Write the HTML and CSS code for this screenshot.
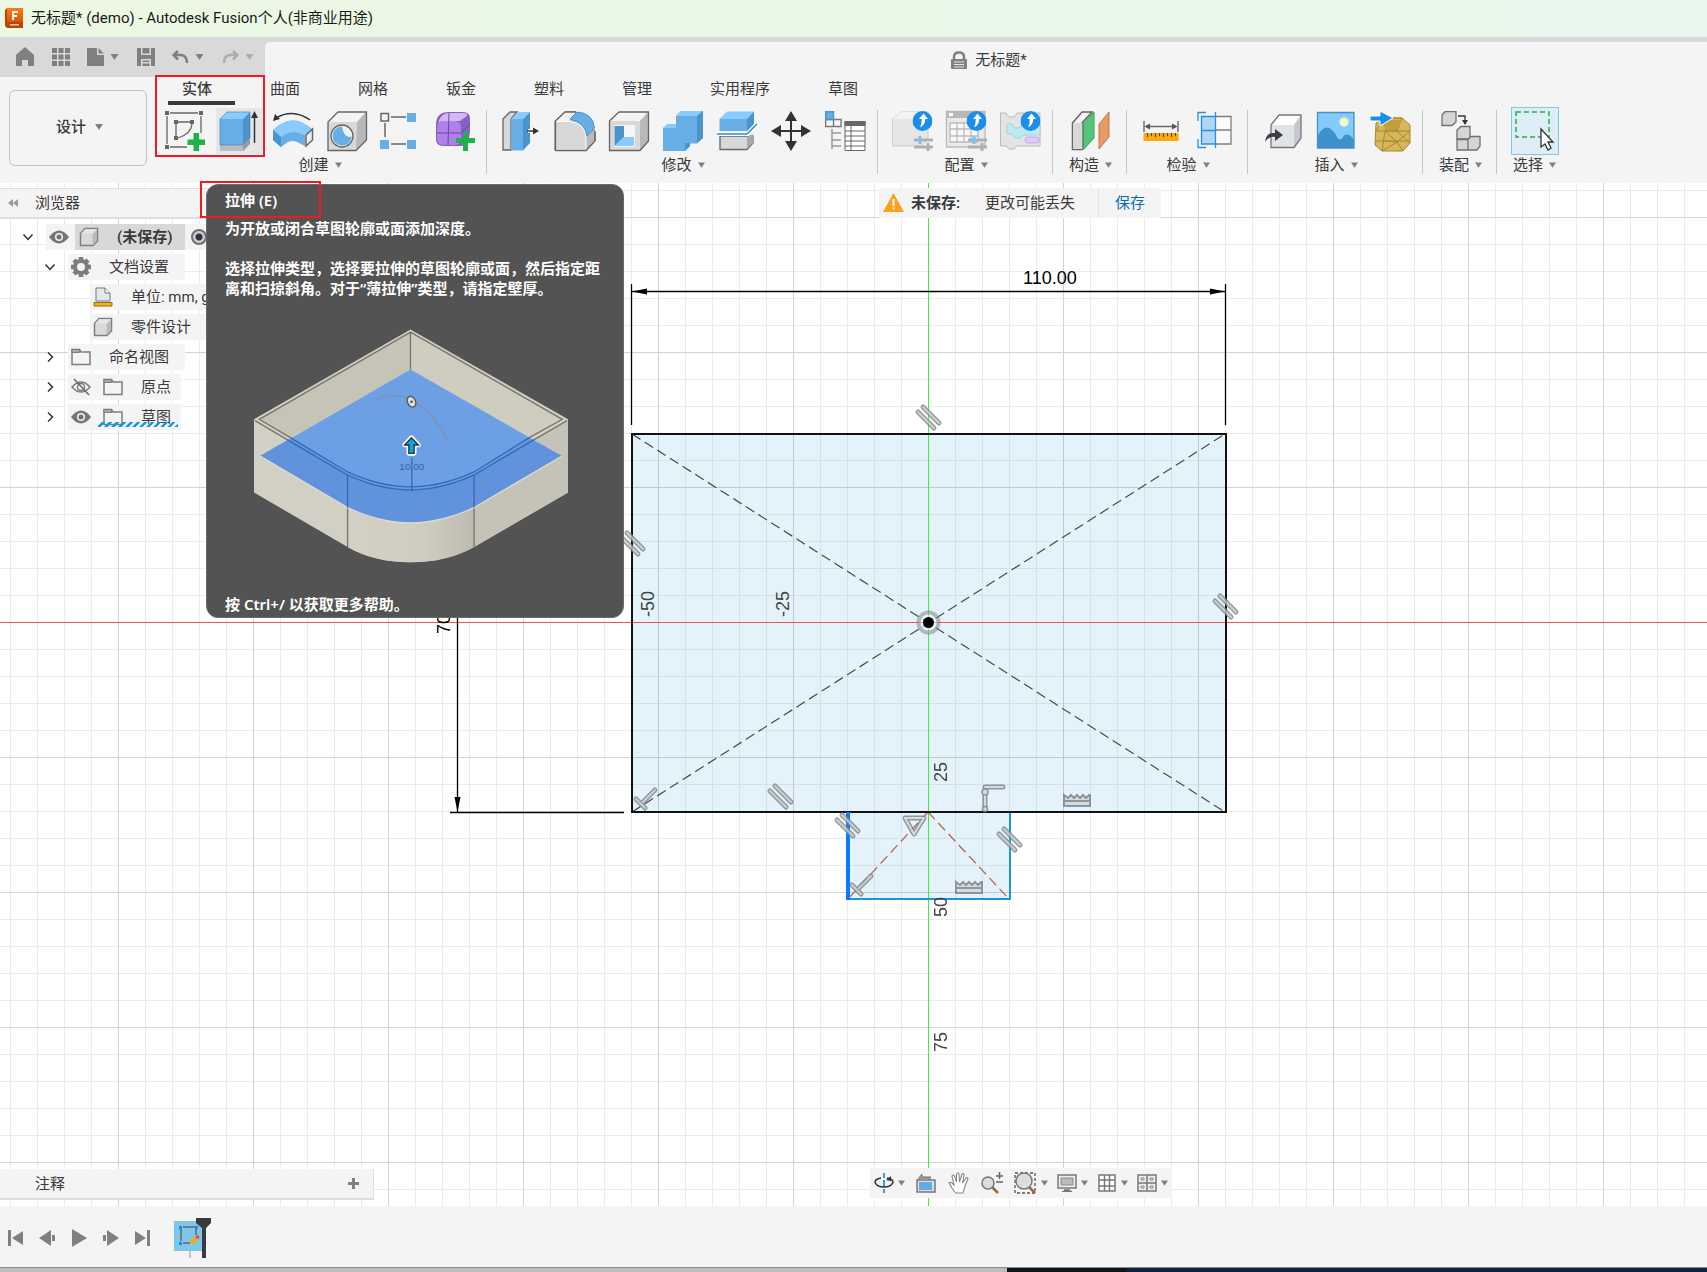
FILE: index.html
```html
<!DOCTYPE html>
<html lang="zh-CN">
<head>
<meta charset="utf-8">
<title>无标题* (demo) - Autodesk Fusion</title>
<link rel="stylesheet" href="styles.css">
</head>
<body>
<svg class="defs" aria-hidden="true">
  <defs>
    <linearGradient id="appGrad" x1="0" y1="0" x2="0" y2="1"><stop offset="0" stop-color="#ff7a1c"/><stop offset="1" stop-color="#e35205"/></linearGradient>
    <symbol id="up-badge" viewBox="0 0 20 20"><circle cx="10" cy="10" r="10" fill="#1a8fe8"/><path d="M11 2.500L15.500 8H12.700Q12.700 14 7.500 16.500Q9.300 13 9.300 8H6.500Z" fill="#fff"/></symbol>
    <symbol id="part" viewBox="0 0 20 20"><path d="M1.500 6.500L6 1.500H18.500V14L14 18.500H1.500Z" fill="#d9d9d9" stroke="#808080" stroke-width="1.500"/><path d="M2 6.500H13.500V18L18 13.500V2H6Z" fill="#eee" opacity=".6"/><path d="M13.500 7V18L18 13.500V2.500Z" fill="#b9b9b9"/></symbol>
    <symbol id="folder" viewBox="0 0 20 20"><path d="M1 17.500V2.500H8.500L10 5H19V17.500Z" fill="#f4f4f4" stroke="#7d7d7d" stroke-width="1.500"/><path d="M1 2.500H8.500V5.500H1Z" fill="#aaa" stroke="#7d7d7d"/></symbol>
    <symbol id="eye" viewBox="0 0 20 20"><path d="M0 10Q10-3 20 10Q10 23 0 10Z" fill="#757575"/><circle cx="10" cy="10" r="4" fill="#f4f4f4"/><circle cx="10" cy="10" r="2.500" fill="#707070"/></symbol>
    <symbol id="open" viewBox="0 0 12 12"><path d="M1.500 3.500L6 8.500L10.500 3.500" fill="none" stroke="#333" stroke-width="1.500"/></symbol>
    <symbol id="closed" viewBox="0 0 12 12"><path d="M4 1.500L8.500 6L4 10.500" fill="none" stroke="#333" stroke-width="1.500"/></symbol>
    <symbol id="caret" viewBox="0 0 8 8"><path d="M0 1H8L4 7Z" fill="#808080"/></symbol>
  </defs>
</svg>

<header class="titlebar">
  <svg width="18" height="20" viewBox="0 0 18 20" aria-hidden="true"><path d="M2 0H18V20H2L0 18V2Z" fill="#b94508"/><path d="M2 0H18V14H2Z" fill="url(#appGrad)"/><path d="M7 3H13V5H9V7H12V9H9V12H7Z" fill="#fff"/><path d="M5 16H14V17.500H5Z" fill="#f5c9ae"/></svg>
  <h1>无标题* (demo) - Autodesk Fusion个人(非商业用途)</h1>
</header>

<div class="docbar">
  <nav class="quick" aria-label="快速访问">
    <button aria-label="主页"><svg width="18" height="20" viewBox="0 0 18 20"><path d="M9 0L18 8V19H12V13H6V19H0V8Z" fill="#808080"/></svg></button>
    <button aria-label="数据面板"><svg width="18" height="18" viewBox="0 0 18 18"><path d="M0 0H5V5H0ZM6.500 0H11.500V5H6.500ZM13 0H18V5H13ZM0 6.500H5V11.500H0ZM6.500 6.500H11.500V11.500H6.500ZM13 6.500H18V11.500H13ZM0 13H5V18H0ZM6.500 13H11.500V18H6.500ZM13 13H18V18H13Z" fill="#808080"/></svg></button>
    <button aria-label="文件"><svg width="17" height="18" viewBox="0 0 17 18"><path d="M0 0H10V7H17V18H0ZM11.500 0L17 5.500H11.500Z" fill="#808080"/></svg><svg width="9" height="8"><use href="#caret"/></svg></button>
    <button aria-label="保存"><svg width="18" height="18" viewBox="0 0 18 18"><path d="M0 0H4V7H14V0H18V18H0Z M5.500 0H12.500V5.500H5.500Z" fill="#808080"/><path d="M4 11H14V18H4Z" fill="#d9d9d9"/><path d="M5.500 12.500H12.500V14H5.500ZM5.500 15.500H12.500V18H5.500Z" fill="#808080"/></svg></button>
    <button aria-label="撤消"><svg width="17" height="14" viewBox="0 0 17 14"><path d="M6 1L1.500 5L6 9.500M2 5H9Q15 5.500 15 13" fill="none" stroke="#808080" stroke-width="2.500"/></svg><svg width="9" height="8"><use href="#caret"/></svg></button>
    <button class="dim" aria-label="重做"><svg width="17" height="14" viewBox="0 0 17 14"><path d="M11 1L15.500 5L11 9.500M15 5H8Q2 5.500 2 13" fill="none" stroke="#808080" stroke-width="2.500"/></svg><svg width="9" height="8"><use href="#caret"/></svg></button>
  </nav>
  <div class="doc-title">
    <svg width="16" height="18" viewBox="0 0 16 18" aria-hidden="true"><path d="M3 9V6Q3 1.500 8 1.500T13 6V9" fill="none" stroke="#808080" stroke-width="2.500"/><rect y="8" width="16" height="10" rx="1" fill="#808080"/><path d="M3 11H13M3 13.500H13M3 16H13" stroke="#e4e4e4"/></svg>
    <span>无标题*</span>
  </div>
</div>

<div class="ribbon">
  <button class="workspace">设计 <svg width="8" height="8"><use href="#caret"/></svg></button>
  <div class="ribbon-main">
    <nav class="tabs" aria-label="选项卡">
      <button class="tab current">实体</button><button class="tab">曲面</button><button class="tab">网格</button><button class="tab">钣金</button><button class="tab">塑料</button><button class="tab">管理</button><button class="tab">实用程序</button><button class="tab">草图</button>
    </nav>
    <div class="groups">
      <section class="group first">
        <div class="tools">
          <button class="tool" aria-label="创建草图"><svg viewBox="0 0 40 40"><g fill="none" stroke="#666" stroke-width="1.300"><path d="M5 2H33M2 5V33M36 5V22M5 36H22M13 11H25M11 13V25M27 13Q26 23 13 27"/></g><g fill="#666"><path d="M0 0H4V4H0ZM34 0H38V4H34ZM0 34H4V38H0ZM9 9H13V13H9ZM25 9H29V13H25ZM9 25H13V29H9Z"/></g><path d="M28.500 22H34V28.500H40V34H34V40H28.500V34H22.500V28.500H28.500Z" fill="#20b14b"/></svg></button>
          <button class="tool hover" aria-label="拉伸"><svg viewBox="0 0 40 40"><path d="M1 34H24L31 27V32L24 40H1Z" fill="#bdbdbd"/><path d="M24 35L31 28V33L24 40Z" fill="#999"/><path d="M1 8H24V34H1Z" fill="#68aee6"/><path d="M1 8L8 1H31L24 8Z" fill="#89cbff"/><path d="M24 8L31 1V27L24 34Z" fill="#4a93cd"/><path d="M1 8L8 1H31V27L24 34H1Z" fill="none" stroke="#3f84bb" stroke-width=".7"/><path d="M35.500 6V32" stroke="#333" stroke-width="1.500"/><path d="M35.500 0L39 7H32Z" fill="#333"/></svg></button>
          <button class="tool" aria-label="旋转"><svg viewBox="0 0 40 40"><path d="M3 7Q20-3 37 9" fill="none" stroke="#333" stroke-width="1.400"/><path d="M0 10L2 3L7 8Z" fill="#333"/><path d="M0 19Q20 0 40 19L32 25V35L24 31Q20 29 15 31L8 36L0 29Z" fill="#68aee6"/><path d="M0 19Q20 0 40 19L32 25Q20 17 8 26Z" fill="#89cbff"/><path d="M0 19L8 26V36L0 29Z" fill="#4a93cd"/><path d="M33 24L39.500 18V29L33 35Z" fill="#eee" stroke="#666" stroke-width="1.500"/></svg></button>
          <button class="tool" aria-label="孔"><svg viewBox="0 0 40 40"><path d="M1 11L11 1H39V29L29 39H1Z" fill="#d8d8d8"/><path d="M1 11L11 1H39L30 11Z" fill="#f4f4f4"/><path d="M30 11L39 1V29L29 39Z" fill="#b8b8b8"/><path d="M1 11L11 1H39.500V29L29 39.500H1Z" fill="none" stroke="#666" stroke-width="1.300"/><circle cx="15" cy="25" r="11" fill="#f2f2f2" stroke="#666" stroke-width="1.300"/><path d="M15 15.500Q17 28 25 25.500Q23 34.500 15 34.500A9.500 9.500 0 0 1 15 15.500Z" fill="#68aee6"/></svg></button>
          <button class="tool" aria-label="阵列"><svg viewBox="0 0 40 40"><path d="M10 6H25M4 12V26M10 33H25" stroke="#666" stroke-width="1.500"/><path d="M0 2.500H7.500V10H0Z" fill="#f4f4f4" stroke="#666" stroke-width="1.500"/><path d="M26 2H35V11H26ZM-1 29H8V38H-1ZM26 29H35V38H26Z" fill="#68aee6"/></svg></button>
          <button class="tool" aria-label="创建形状"><svg viewBox="0 0 40 40"><path d="M1 14Q1 1 14 1H28Q35 1 35 8V20Q34 34 26 35H8Q1 35 1 28Z" fill="#8b5fc0"/><path d="M3 12Q6 2 14 2H28Q33 2 32 5L25 10H7Z" fill="#d3b8f5"/><rect x="2" y="10" width="24" height="24" rx="6" fill="#ad80ea"/><path d="M14 2L13 34M2 22H26L35 13" fill="none" stroke="#6c48a0"/><path d="M28.500 20H33V27H40V32H33V40H28V32H21V27H28.500Z" fill="#20b14b"/></svg></button>
        </div>
        <button class="group-label">创建<svg width="7" height="8"><use href="#caret"/></svg></button>
      </section>
      <section class="group">
        <div class="tools">
          <button class="tool" aria-label="按拉"><svg viewBox="0 0 40 40"><path d="M2 8L9 1H16L10 8V39H2Z" fill="#d8d8d8" stroke="#666" stroke-width="1.300"/><path d="M10 8H22V39.500H10Z" fill="#68aee6"/><path d="M10 8L17 1H29L22 8Z" fill="#89cbff"/><path d="M22 8L29 1V32L22 39.500Z" fill="#4a93cd"/><path d="M27 20H34" stroke="#fff" stroke-width="4"/><path d="M26 20H34" stroke="#333" stroke-width="1.500"/><path d="M32 16.500L38 20L32 23.500Z" fill="#333"/></svg></button>
          <button class="tool" aria-label="圆角"><svg viewBox="0 0 40 40"><path d="M0 10L10 1H21L40 20V30L31 39.500H0Z" fill="#b9b9b9" stroke="#666"/><path d="M.5 10.500H15Q30 12 31 26V39H.5Z" fill="#d8d8d8" stroke="#fff"/><path d="M.5 10L10 1H21L15 8V10Z" fill="#f4f4f4"/><path d="M.5 39.500V10L10 1H21M.5 39.500H31L40 30V21" fill="none" stroke="#666" stroke-width="1.300"/><path d="M15 8L22 1Q38 2 39.500 17L32 25Q30 11 15 8Z" fill="#68aee6" stroke="#4a93cd"/></svg></button>
          <button class="tool" aria-label="抽壳"><svg viewBox="0 0 40 40"><path d="M.5 10L10 1H39.500V30L31 39.500H.5Z" fill="#d8d8d8"/><path d="M.5 10L10 1H39L31 10Z" fill="#f4f4f4"/><path d="M31 10L39 1V30L31 39Z" fill="#b9b9b9"/><path d="M.5 10L10 1H39.500V30L31 39.500H.5Z" fill="none" stroke="#666" stroke-width="1.300"/><path d="M5 14H26V36H5Z" fill="#f6f6f6"/><path d="M5.500 15H15V26L5.500 35Z" fill="#4a93cd"/><path d="M15 26H25V35H5.500Z" fill="#89cbff"/></svg></button>
          <button class="tool" aria-label="合并"><svg viewBox="0 0 40 40"><path d="M0 17L5 13H13V5L18 0H40V27L34 32.500H27V35L22 40H0Z" fill="#68aee6"/><path d="M0 17L5 13H13V17ZM13 5L18 0H40L34 5Z" fill="#89cbff"/><path d="M34 5L40 0V27L34 32ZM22 40V32H27V35Z" fill="#4a93cd"/></svg></button>
          <button class="tool" aria-label="分割"><svg viewBox="0 0 40 40"><path d="M3 25H36V32L30 38.500H3Z" fill="#d8d8d8" stroke="#666" stroke-width="1.300"/><path d="M30 26L36 23V32L30 38Z" fill="#aaa"/><path d="M2.500 8H30V20H2.500Z" fill="#68aee6"/><path d="M2.500 8L10 .5H37L30 8Z" fill="#89cbff"/><path d="M30 8L37 .5V13L30 20Z" fill="#4a93cd"/><path d="M0 23H31L40 13" fill="none" stroke="#fff" stroke-width="4"/><path d="M0 23H30L40 13" fill="none" stroke="#258de0" stroke-width="1.500"/></svg></button>
          <button class="tool" aria-label="移动"><svg viewBox="0 0 40 40"><path d="M20 8V32M8 20H32" stroke="#333" stroke-width="2"/><path d="M20 0L26 10H14ZM20 40L14 30H26ZM0 20L10 14V26ZM40 20L30 26V14Z" fill="#333"/></svg></button>
          <button class="tool" aria-label="更改参数"><svg viewBox="0 0 40 40"><path d="M.7 8.500H16V15.500H.7ZM8.500 8.500V15.500" fill="#f8f8f8" stroke="#777" stroke-width="1.400"/><path d="M.7.700H8.500V8.500H.7Z" fill="#68aee6" stroke="#4a93cd" stroke-width="1.400"/><path d="M7 18V38M7 22H16M7 29H16M7 35H16" fill="none" stroke="#999" stroke-width="1.500"/><path d="M20 11H40V39.500H20Z" fill="#fff" stroke="#666"/><path d="M19.500 10H40.500V15H19.500Z" fill="#666"/><path d="M20 20H40M20 25H40M20 30H40M20 35H40M26 15V39" stroke="#666" stroke-width="1"/></svg></button>
        </div>
        <button class="group-label">修改<svg width="7" height="8"><use href="#caret"/></svg></button>
      </section>
      <section class="group">
        <div class="tools">
          <button class="tool" aria-label="创建配置"><svg viewBox="0 0 40 40"><path d="M.5 8L9 1H36V28L30 35H.5Z" fill="#e6e6e6" stroke="#ccc"/><path d="M.5 8L9 1H36L30 8Z" fill="#f3f3f3"/><path d="M22 29H41M22 36H41" stroke="#b0b0b0" stroke-width="3"/><path d="M28 25V33" stroke="#7fc0f0" stroke-width="3"/><path d="M36 32V40" stroke="#b0b0b0" stroke-width="3"/><use href="#up-badge" x="20.500" y="0" width="20" height="20"/></svg></button>
          <button class="tool" aria-label="配置表"><svg viewBox="0 0 40 40"><path d="M.5.500H39V36H.5Z" fill="#e9e9e9" stroke="#bbb" stroke-width="1.300"/><path d="M0 0H39V7H0Z" fill="#b9b9b9"/><path d="M3 2H7V5H3Z" fill="#fff"/><path d="M4 12H32V31H4ZM4 18H32M4 25H32M11 12V31M18 12V31M25 12V31" fill="#fafafa" stroke="#bbb" stroke-width="1.300"/><path d="M22 29H41M22 36H41" stroke="#b0b0b0" stroke-width="3"/><path d="M28 25V33" stroke="#7fc0f0" stroke-width="3"/><path d="M36 32V40" stroke="#b0b0b0" stroke-width="3"/><use href="#up-badge" x="20.500" y="0" width="20" height="20"/></svg></button>
          <button class="tool" aria-label="规则"><svg viewBox="0 0 40 40"><path d="M.5 2H6L9 6H14L17 2H40V35H17L14 38H9L6 35H.5Z" fill="#e4e4e4" stroke="#bbb"/><path d="M7 13H12L14 17H19L22 14H40V24H24L20 27H15L12 23H7Z" fill="#bfeaf0" stroke="#9bd5dd"/><rect x="25" y="26" width="14" height="6" rx="3" fill="#dccbfa" stroke="#c3abea"/><use href="#up-badge" x="20.500" y="0" width="20" height="20"/></svg></button>
        </div>
        <button class="group-label">配置<svg width="7" height="8"><use href="#caret"/></svg></button>
      </section>
      <section class="group">
        <div class="tools">
          <button class="tool" aria-label="偏移平面"><svg viewBox="0 0 40 40"><path d="M1.500 12L11 1H21L11 12V38.500H1.500Z" fill="#f3f3f3" stroke="#666" stroke-width="1.500"/><path d="M2 12H11V38H2Z" fill="#d8d8d8"/><path d="M12.500 12L23 1V27L12.500 38.500Z" fill="#55c37a" stroke="#3ba363"/><path d="M28 13L38 1V26L28 38Z" fill="#e69a66" stroke="#c4784a"/></svg></button>
        </div>
        <button class="group-label">构造<svg width="7" height="8"><use href="#caret"/></svg></button>
      </section>
      <section class="group">
        <div class="tools">
          <button class="tool" aria-label="测量"><svg viewBox="0 0 40 40"><path d="M3 10V21M37 10V21M5 15.500H35" stroke="#666" stroke-width="1.400"/><path d="M3.500 15.500L9 12.500V18.500ZM36.500 15.500L31 12.500V18.500Z" fill="#555"/><path d="M2.500 22H37.500V30H2.500Z" fill="#fba80c"/><path d="M6.500 22V26M10.500 22V25M14.500 22V26M18.500 22V25M22.500 22V26M26.500 22V25M30.500 22V26M34.500 22V25" stroke="#444"/></svg></button>
          <button class="tool" aria-label="截面分析"><svg viewBox="0 0 40 40"><path d="M20 5.500H36V33H20M20 19H36" fill="#fafafa" stroke="#808080" stroke-width="1.300"/><path d="M6.500 5.500H20.500V33H6.500Z" fill="#b3d6f2"/><path d="M6.500 5.500H20.500V33H6.500ZM6.500 19.500H20.500M20.500 1V37M3 10V1.500H11M3 28V36.500H11" fill="none" stroke="#2590e2" stroke-width="1.300"/></svg></button>
        </div>
        <button class="group-label">检验<svg width="7" height="8"><use href="#caret"/></svg></button>
      </section>
      <section class="group">
        <div class="tools">
          <button class="tool" aria-label="插入衍生"><svg viewBox="0 0 40 40"><path d="M9 14L17 4H39V27L32 36.500H9Z" fill="#e1e3e6"/><path d="M9 14L17 4H39L32 14Z" fill="#fff"/><path d="M32 14L39 4V27L32 36.500Z" fill="#c5c8d0"/><path d="M9 14L17 4H39V27L32 36.500H9Z" fill="none" stroke="#777" stroke-width="1.300"/><path d="M3 31Q4 21 13 22V18L21 24L13 30V26Q7 25 3 31Z" fill="#3c3f42"/></svg></button>
          <button class="tool" aria-label="贴图"><svg viewBox="0 0 40 40"><path d="M1.500 1.500H38V37H1.500Z" fill="#82cbfa" stroke="#4592c7" stroke-width="1.300"/><circle cx="28" cy="11" r="4.500" fill="#fff8c8"/><path d="M2 24Q11 9 20 24Q23 32 27 26Q31 20 38 29V37H2Z" fill="#3d92c9"/></svg></button>
          <button class="tool" aria-label="插入网格"><svg viewBox="0 0 40 40"><path d="M6 12L14 7H32L40 14V32L33 40H12L5 34Z" fill="#d8b75b" stroke="#a88632"/><path d="M6 20L14 7L32 7L27 20L15 20L12 40M6 20L40 20L27 31L33 40M5 30H40M15 20L27 31L15 30M27 20L40 32M12 40L27 31" fill="none" stroke="#a88632"/><path d="M13 9H32L27 19H15Z" fill="#c39d3f"/><path d="M0 5H10V0L23 7L10 15V10H0Z" fill="#1a8fe8" stroke="#fff"/></svg></button>
        </div>
        <button class="group-label">插入<svg width="7" height="8"><use href="#caret"/></svg></button>
      </section>
      <section class="group">
        <div class="tools">
          <button class="tool" aria-label="新建零部件"><svg viewBox="0 0 40 40"><g fill="#d5d5d5" stroke="#707070" stroke-width="1.300"><path d="M1 4L4 .7H15V11L11 14.500H1Z"/><path d="M16 19L20 15.500H29V28H16Z"/><path d="M16 28.500H27V39H16ZM27 28.500L30 25.500H39V35L36 39H27Z"/></g><path d="M17 5H24V10" fill="none" stroke="#333" stroke-width="1.300"/><path d="M21 9H27L24 14Z" fill="#333"/></svg></button>
        </div>
        <button class="group-label">装配<svg width="7" height="8"><use href="#caret"/></svg></button>
      </section>
      <section class="group last">
        <div class="tools">
          <button class="tool selected" aria-label="选择"><svg viewBox="0 0 40 40"><path d="M1 1H34V26H1Z" fill="none" stroke="#20b14b" stroke-width="1.500" stroke-dasharray="5 3"/><path d="M26 18V36L30 33L33 39L36 37L33 31H38Z" fill="#fff" stroke="#333" stroke-width="1.300"/></svg></button>
        </div>
        <button class="group-label">选择<svg width="7" height="8"><use href="#caret"/></svg></button>
      </section>
    </div>
  </div>
</div>

<main class="canvas">
  <svg class="sketch" aria-label="草图">
    <defs>
      <pattern id="minor" width="27" height="27" patternUnits="userSpaceOnUse"><path d="M0 0H27V1H1V27H0Z" fill="#000" fill-opacity=".08"/></pattern>
      <pattern id="major" width="135" height="135" patternUnits="userSpaceOnUse"><path d="M0 0H135V1H1V135H0Z" fill="#000" fill-opacity=".1"/></pattern>
      <g id="parallel" fill="none" stroke-linecap="round"><path d="M-5-10L11 6M-10-5L6 11" stroke="#858b8e" stroke-width="5"/><path d="M-5-10L11 6M-10-5L6 11" stroke="#c4cacc" stroke-width="2"/></g>
      <g id="mid" fill="none" stroke-linecap="round"><path d="M-2 3L10-9M-9 0L0 9" stroke="#858b8e" stroke-width="5"/><path d="M-2 3L10-9M-9 0L0 9" stroke="#c4cacc" stroke-width="2"/></g>
      <g id="horiz"><path d="M-13 1H13V6H-13ZM-13 1V-5L-9-2L-6-5L-3-2L0-5L3-2L6-5L9-2L12-5H13V1" fill="#d3d9db" stroke="#7f868a" stroke-width="2"/></g>
    </defs>
    <g transform="translate(928 439)">
      <path d="M-296-188H297V190H-296ZM-80 190H81V277H-80Z" fill="#e4f3fb"/>
      <path d="M-1080-540H1080V810H-1080Z" fill="url(#minor)"/>
      <path d="M-1080-540H1080V810H-1080Z" fill="url(#major)"/>
      <path d="M-928 0H1800V1H-928Z" fill="#f25050"/>
      <path d="M0-439H1V800H0Z" fill="#3cf03c"/>
      <g fill="none" stroke="#444c50" stroke-width="1.200" stroke-dasharray="10 5"><path d="M-296-188L297 190M-296 190L297-188"/></g>
      <path d="M0 190L-80 277M0 190L81 277" fill="none" stroke="#b5694a" stroke-width="1.300" stroke-dasharray="10 5"/>
      <path d="M-80 277H82V190" fill="none" stroke="#1a96d4" stroke-width="2"/>
      <path d="M-296-188H298V190H-296Z" fill="none" stroke="#111" stroke-width="2"/>
      <path d="M-80 190V278" stroke="#0a7bff" stroke-width="4"/>
      <g fill="none" stroke="#000" stroke-width="1.300"><path d="M-296.500-338V-197M297.500-338V-197M-296-330.500H297M-470.500-180V190M-478 190.500H-304"/></g>
      <path d="M-296-330.500L-281-333.500V-327.500ZM297-330.500L282-333.500V-327.500ZM-470.500 190L-473.500 175H-467.500Z"/>
      <circle cx=".5" cy=".5" r="10" fill="#fff" fill-opacity=".4" stroke="#6f7c82" stroke-opacity=".5" stroke-width="4"/>
      <circle cx=".5" cy=".5" r="5.500"/>
      <g opacity=".85"><use href="#parallel" x="0" y="-205"/><use href="#parallel" x="-296" y="-79"/><use href="#parallel" x="297" y="-16"/><use href="#parallel" x="-148" y="174"/><use href="#parallel" x="-81" y="203"/><use href="#parallel" x="81" y="217"/>
      <use href="#mid" x="-283" y="177"/><use href="#mid" x="-67" y="263"/><use href="#horiz" x="149" y="178"/><use href="#horiz" x="41" y="265"/>
      <path d="M-23 196H-4L-14 212Z" fill="none" stroke="#7f868a" stroke-width="5" stroke-linejoin="round"/><path d="M-23 196H-4L-14 212Z" fill="none" stroke="#d3d9db" stroke-width="2"/>
      <path d="M57 168V187M57 165H75" fill="none" stroke="#7f868a" stroke-width="5" stroke-linecap="round"/><path d="M57 168V187M57 165H75" fill="none" stroke="#d3d9db" stroke-width="2" stroke-linecap="round"/><circle cx="57" cy="170" r="3" fill="#d3d9db" stroke="#7f868a" stroke-width="1.500"/><circle cx="57" cy="187" r="2.500" fill="#d3d9db" stroke="#7f868a" stroke-width="1.500"/></g>
      <g class="dims"><text x="95" y="-338">110.00</text><text transform="translate(-478 12) rotate(-90)">70.00</text></g>
      <g class="ticks"><text transform="translate(-274 -5) rotate(-90)">-50</text><text transform="translate(-139 -5) rotate(-90)">-25</text><text transform="translate(19 160) rotate(-90)">25</text><text transform="translate(19 295) rotate(-90)">50</text><text transform="translate(19 430) rotate(-90)">75</text></g>
    </g>
  </svg>

  <aside class="browser">
    <div class="browser-head"><button aria-label="折叠"><svg width="10" height="8" viewBox="0 0 10 8"><path d="M5 0V8L0 4ZM10 0V8L5 4Z" fill="#999"/></svg></button><h2>浏览器</h2></div>
    <ul class="tree">
      <li class="lv1"><svg class="chev"><use href="#open"/></svg><div class="row"><svg class="ico"><use href="#eye"/></svg><div class="picked"><svg class="ico"><use href="#part"/></svg><b>(未保存)</b></div><input type="radio" checked aria-label="激活"></div></li>
      <li class="lv2"><svg class="chev"><use href="#open"/></svg><div class="row"><svg class="ico" viewBox="0 0 20 20"><circle cx="10" cy="10" r="6" fill="none" stroke="#7d7d7d" stroke-width="4"/><path d="M10 0V4M10 16V20M0 10H4M16 10H20M3 3L5.500 5.500M14.500 14.500L17 17M17 3L14.500 5.500M5.500 14.500L3 17" stroke="#7d7d7d" stroke-width="4.500"/></svg><span>文档设置</span></div></li>
      <li class="lv3"><div class="row"><svg class="ico" viewBox="0 0 20 20"><path d="M3 14V1H12L17 6V14Z" fill="#e2e8ee" stroke="#777"/><path d="M12 1V6H17" fill="#fff" stroke="#777"/><path d="M1 15.500H19V19H1Z" fill="#f2b21c" stroke="#9a6a10"/></svg><span>单位: mm, g</span></div></li>
      <li class="lv3"><div class="row"><svg class="ico"><use href="#part"/></svg><span>零件设计</span></div></li>
      <li class="lv2"><svg class="chev"><use href="#closed"/></svg><div class="row"><svg class="ico"><use href="#folder"/></svg><span>命名视图</span></div></li>
      <li class="lv2"><svg class="chev"><use href="#closed"/></svg><div class="row paired"><svg class="ico" viewBox="0 0 20 20"><path d="M1 10Q10 0 19 10Q10 20 1 10Z" fill="none" stroke="#7d7d7d" stroke-width="1.500"/><circle cx="10" cy="10" r="3.500" fill="none" stroke="#7d7d7d" stroke-width="1.500"/><path d="M3 2L18 18" stroke="#666" stroke-width="1.500"/></svg><svg class="ico"><use href="#folder"/></svg><span>原点</span></div></li>
      <li class="lv2"><svg class="chev"><use href="#closed"/></svg><div class="row paired editing"><svg class="ico"><use href="#eye"/></svg><svg class="ico"><use href="#folder"/></svg><span>草图</span></div></li>
    </ul>
  </aside>

  <div class="notice" role="status">
    <svg width="21" height="19" viewBox="0 0 21 19" aria-hidden="true"><path d="M10.500 0L21 19H0Z" fill="#fba01c"/><path d="M9.500 6H11.500V13H9.500ZM9.500 14.500H11.500V16.500H9.500Z" fill="#fff"/></svg>
    <b>未保存:</b><span>更改可能丢失</span><a href="#save">保存</a>
  </div>

  <div class="comments"><span>注释</span><button aria-label="添加注释"><svg width="11" height="11" viewBox="0 0 11 11"><path d="M4 0H7V4H11V7H7V11H4V7H0V4H4Z" fill="#808080"/></svg></button></div>

  <div class="viewbar" role="toolbar" aria-label="视图">
    <button aria-label="动态观察"><svg width="20" height="22" viewBox="0 0 20 22"><path d="M10 1V6M10 8V15M10 17V21" stroke="#3f9ce2" stroke-width="2"/><path d="M7 6Q1 7 1 10.500Q3 15 10 15T19 10.500Q19 7 13 6" fill="none" stroke="#333" stroke-width="1.500"/><path d="M12 8L17 4V9Z" fill="#333"/></svg><svg width="7" height="8"><use href="#caret"/></svg></button>
    <button class="plain" aria-label="观察方向"><svg width="20" height="20" viewBox="0 0 20 20"><path d="M1 7H19V19H1Z" fill="#ddd" stroke="#777" stroke-width="1.500"/><path d="M3 9H16V17H3Z" fill="#62ace6"/><path d="M2 6L6 1V4H15L13 7" fill="#999" stroke="#777"/></svg></button>
    <button class="plain" aria-label="平移"><svg width="22" height="22" viewBox="0 0 22 22"><path d="M7 20L4 16Q2 12 1 11Q2 9 5 12L6 13L4 4Q5 2 6.500 4L8.500 10L8.500 2Q10 0 11 2L11.500 10L14 2Q16 1 16 3L14.500 11L18 6Q20 5 20 7L17 14L15 21H8Z" fill="#fff" stroke="#888" stroke-width="1.100"/></svg></button>
    <button class="plain" aria-label="缩放"><svg width="22" height="22" viewBox="0 0 22 22"><path d="M11 15L17 21" stroke="#9a6a36" stroke-width="2.500"/><circle cx="7" cy="11" r="6" fill="#ddd" stroke="#777" stroke-width="1.500"/><path d="M15 4H22M18.500 0V7M15 10H22" stroke="#666" stroke-width="1.500"/></svg></button>
    <button aria-label="缩放到窗口"><svg width="24" height="22" viewBox="0 0 24 22"><path d="M2 1H22V21H2Z" fill="none" stroke="#555" stroke-width="1.300" stroke-dasharray="3 2"/><path d="M16 15L22 21" stroke="#9a6a36" stroke-width="2.500"/><circle cx="11" cy="9" r="8" fill="#ddd" stroke="#777" stroke-width="1.500"/></svg><svg width="7" height="8"><use href="#caret"/></svg></button>
    <button aria-label="显示设置"><svg width="20" height="18" viewBox="0 0 20 18"><path d="M1 1H19V14H1Z" fill="#eee" stroke="#777" stroke-width="1.500"/><path d="M4 4H16V11H4Z" fill="#bbb" stroke="#888"/><path d="M7 16H13M5 17.500H15" stroke="#777" stroke-width="1.500"/></svg><svg width="7" height="8"><use href="#caret"/></svg></button>
    <button aria-label="栅格和捕捉"><svg width="20" height="18" viewBox="0 0 20 18"><path d="M2 1H18V17H2ZM2 6H18M2 12H18M7.500 1V17M12.500 1V17" fill="#fff" stroke="#777" stroke-width="1.500"/></svg><svg width="7" height="8"><use href="#caret"/></svg></button>
    <button aria-label="视口"><svg width="20" height="18" viewBox="0 0 20 18"><path d="M1 1H19V17H1ZM1 9H19M10 1V17" fill="#eee" stroke="#777" stroke-width="1.500"/><path d="M4 4H7V6H4ZM13 4H16V6H13ZM4 12H7V14H4ZM13 12H16V14H13Z" fill="none" stroke="#888"/></svg><svg width="7" height="8"><use href="#caret"/></svg></button>
  </div>
</main>

<footer class="timeline">
  <button aria-label="转至起点"><svg width="15" height="16" viewBox="0 0 15 16"><path d="M0 0H3V16H0ZM15 1V15L4 8Z" fill="#808080"/></svg></button>
  <button aria-label="上一步"><svg width="16" height="16" viewBox="0 0 16 16"><path d="M12 0V16L0 8ZM13 5H16V11H13Z" fill="#808080"/></svg></button>
  <button aria-label="播放"><svg width="16" height="18" viewBox="0 0 16 18"><path d="M1 0L16 9L1 18Z" fill="#808080"/></svg></button>
  <button aria-label="下一步"><svg width="16" height="16" viewBox="0 0 16 16"><path d="M4 0V16L16 8ZM0 5H3V11H0Z" fill="#808080"/></svg></button>
  <button aria-label="转至终点"><svg width="15" height="16" viewBox="0 0 15 16"><path d="M12 0H15V16H12ZM0 1V15L11 8Z" fill="#808080"/></svg></button>
  <button class="feature" aria-label="草图 1"><svg width="38" height="40" viewBox="0 0 38 40"><path d="M0 3H30V33H0Z" fill="#7fc7ea"/><path d="M16 33V40" stroke="#c4c4c4" stroke-width="2"/><path d="M9 9H21M7 11V23M9 25H16M22 11V17" stroke="#666" stroke-width="1.500"/><path d="M5 8H8V11H5ZM21 8H24V11H21ZM5 24H8V27H5Z" fill="#1a8fe8"/><path d="M17 25L22 20" stroke="#f5a91c" stroke-width="5"/><circle cx="23.500" cy="19" r="1.800" fill="#f04040"/><path d="M22 0H37V5L32 10V40H28V10L22 5Z" fill="#3a3a3a"/></svg></button>
</footer>
<div class="desktop-edge"></div>

<div class="tooltip" role="tooltip">
  <h3>拉伸 (E)</h3>
  <p>为开放或闭合草图轮廓或面添加深度。</p>
  <p class="more">选择拉伸类型，选择要拉伸的草图轮廓或面，然后指定距离和扫掠斜角。对于“薄拉伸”类型，请指定壁厚。</p>
  <svg class="figure" viewBox="150 440 970 720" aria-hidden="true">
    <defs><linearGradient id="wall"><stop offset="0" stop-color="#d3d0c5"/><stop offset=".6" stop-color="#cfccc0"/><stop offset="1" stop-color="#bdbab0"/></linearGradient></defs>
    <path d="M632 450L1105 720V940L823 1103Q740 1149 632 1149T443 1103L162 940V720Z" fill="#d2cfc4"/>
    <path d="M443 890Q540 940 632 936Q740 940 823 885V1103Q740 1149 632 1149T443 1103Z" fill="url(#wall)"/>
    <path d="M823 885L1105 724V940L823 1103Z" fill="#c5c2b7"/>
    <path d="M632 460L182 720L270 775L632 570Z" fill="#c6c3b7"/>
    <path d="M632 460L1085 720L990 775L632 570Z" fill="#cfccc0"/>
    <path d="M632 570L1087 830L823 985Q740 1031 632 1031T443 985L180 830Z" fill="#6d9fe4"/>
    <path d="M270 778L180 830L443 985Q540 1031 632 1031T823 985L1087 830L990 778L823 885Q740 932 632 932T443 885Z" fill="#5f91da" fill-opacity=".85"/>
    <path d="M180 830L443 985Q540 1031 632 1031T823 985L1087 830" fill="none" stroke="#dedccf" stroke-width="4"/>
    <g fill="none" stroke="#77756c" stroke-width="4"><path d="M632 458L178 720L270 774M632 458L1088 720L990 774M632 458V570M165 724L260 780M1102 724L1005 780M443 988V1103M823 988V1103"/></g>
    <g fill="none" stroke="#3569b5" stroke-width="4"><path d="M270 774L443 878Q540 923 632 923T823 878L990 774M260 780L443 887Q540 932 632 932T823 887L1005 780M443 887V985M823 887V985M636 835V937"/></g>
    <path d="M525 665Q560 635 620 655Q700 690 743 785" fill="none" stroke="#8291a8" stroke-width="4"/>
    <ellipse cx="635" cy="667" rx="12" ry="17" transform="rotate(-25 635 667)" fill="#ddd" stroke="#555" stroke-width="4"/><circle cx="635" cy="667" r="4" fill="#555"/>
    <path d="M635 775L656 797H643V822H627V797H614Z" fill="#10a4e0" stroke="#fff" stroke-width="14" stroke-linejoin="round"/><path d="M635 775L656 797H643V822H627V797H614Z" fill="#10a4e0" stroke="#234" stroke-width="4"/>
    <text x="636" y="872" text-anchor="middle">10.00</text>
  </svg>
  <p class="help">按 Ctrl+/ 以获取更多帮助。</p>
</div>
<div class="mark mark-tool"></div>
<div class="mark mark-tip"></div>
</body>
</html>
```

FILE: styles.css
```css
* { box-sizing: border-box; }
body {
  margin: 0;
  min-height: 100vh;
  display: flex;
  flex-direction: column;
  position: relative;
  overflow: hidden;
  background: #f4f4f4;
  color: #3a3a3a;
  font: 15px/20px Roboto, "Noto Sans CJK SC", sans-serif;
}
h1, h2, h3, p, ul { margin: 0; padding: 0; font-size: inherit; font-weight: inherit; }
button { margin: 0; padding: 0; border: 0; background: none; color: inherit; font: inherit; display: flex; align-items: center; justify-content: center; }
svg { display: block; flex: none; }
.defs { position: absolute; width: 0; height: 0; }

.titlebar { display: flex; align-items: center; gap: 8px; height: 37px; padding: 0 0 2px 5px; background: linear-gradient(90deg, #ebf8e3, #e8f7ec); color: #1a1a1a; }

.docbar { display: flex; height: 40px; background: #d9d9d9; }
.quick { display: flex; align-items: center; justify-content: space-between; width: 265px; padding: 0 11px 0 16px; }
.quick button { gap: 6px; }
.quick .dim { opacity: .5; }
.doc-title { flex: 1; display: flex; align-items: center; justify-content: center; gap: 8px; margin-top: 5px; padding-left: 6px; background: #f4f4f4; border-top-left-radius: 5px; }

.ribbon { display: flex; height: 106px; background: #f4f4f4; }
.workspace { width: 138px; height: 76px; margin: 13px 11px 0 9px; padding: 0 0 2px 3px; gap: 9px; border: 1px solid #c2c2c2; border-radius: 6px; font-weight: 500; }
.ribbon-main { flex: 1; }
.tabs { display: flex; gap: 21px; height: 28px; padding-left: 10px; }
.tab { padding: 0 23px 0 14px; border-bottom: 4px solid transparent; }
.tab.current { border-color: #3a3a3a; font-weight: 500; }
.groups { display: flex; padding-top: 5px; height: 69px; }
.group { padding: 1px 12px 0 14px; border-right: 1px solid #c6c6c6; }
.group.first { padding: 1px 11px 0 7px; }
.group.last { border: 0; }
.tools { display: flex; justify-content: center; gap: 14px; min-width: 47px; }
.tool { width: 40px; height: 40px; }
.tool svg { width: 40px; height: 40px; overflow: visible; }
.tool.hover { background: #e6e6e6; box-shadow: 0 0 0 3px #e6e6e6; }
.tool.selected { background: #deedf6; box-shadow: 0 0 0 3px #deedf6, 0 0 0 4px #7fc6e8; }
.group-label { width: 100%; gap: 6px; margin-top: 4px; }

.canvas { flex: 1; position: relative; background: #fff; overflow: hidden; }
.sketch { position: absolute; inset: 0; width: 100%; height: 100%; }
.sketch text { font: 18px "Liberation Sans", Arial, sans-serif; }
.ticks { fill: #444; }

.browser { position: absolute; left: 0; top: 5px; width: 400px; }
.browser-head { display: flex; align-items: center; gap: 17px; height: 31px; padding: 0 0 1px 8px; background: #f4f4f4; border: solid #dedede; border-width: 1px 1px 2px 0; }
.tree { list-style: none; margin-top: 5px; display: grid; gap: 4px; }
.tree li { display: flex; align-items: center; height: 26px; }
.chev { width: 12px; height: 12px; margin-right: 12px; }
.lv1 { padding-left: 22px; }
.lv2 { padding-left: 44px; }
.lv3 { padding-left: 90px; }
.row { display: flex; align-items: center; gap: 12px; height: 26px; padding: 0 16px 0 3px; background: #f4f4f4; }
.row span { margin-left: 6px; }
.paired { padding-right: 10px; }
.ico { width: 20px; height: 20px; }
.lv3 .row { padding-right: 30px; }
.lv1 .row { gap: 6px; }
.picked { display: flex; align-items: center; gap: 18px; height: 26px; padding: 0 13px 0 4px; background: #d8d8d8; }
.picked b { font-weight: 600; }
.row input { appearance: none; width: 16px; height: 16px; margin: 0; border: 2px solid #707070; border-radius: 50%; background: radial-gradient(#333 0 3px, #c5ccdc 4px); }
.editing { position: relative; }
.editing::after { content: ""; position: absolute; left: 30px; right: 3px; bottom: 3px; height: 5px; background: repeating-linear-gradient(-45deg, #109ade 0 2px, transparent 3px 5px); }

.notice { position: absolute; left: 879px; top: 5px; display: flex; align-items: center; height: 30px; padding: 0 0 1px 4px; background: #f4f4f4; }
.notice b { margin: 0 25px 0 7px; font-weight: 600; }
.notice span { padding-right: 23px; }
.notice a { padding: 0 16px; line-height: 28px; border-left: 1px solid #e2e2e2; color: #0a6cb0; text-decoration: none; }

.comments { position: absolute; left: 0; bottom: 6px; width: 374px; height: 31px; display: flex; align-items: center; justify-content: space-between; padding: 0 14px 0 35px; background: #f4f4f4; border: solid #dedede; border-width: 0 1px 2px 0; }
.viewbar { position: absolute; left: 870px; bottom: 8px; height: 30px; padding: 0 4px; display: flex; gap: 9px; background: #f4f4f4; }
.viewbar button { gap: 4px; }
.viewbar .plain { width: 24px; }

.timeline { display: flex; align-items: center; gap: 16px; height: 61px; padding: 2px 0 0 8px; background: #f4f4f4; }
.feature { margin-left: 8px; }
.desktop-edge { height: 5px; border-top: 1px solid #8c8c8c; background: linear-gradient(90deg, #bdbdbd 0 59%, #101418 59% 66%, #0c2344 66%); }

.tooltip { position: absolute; left: 206px; top: 184px; width: 418px; height: 434px; padding: 5px 20px 6px 18px; display: flex; flex-direction: column; border-radius: 12px; border: 1px solid #6a6a6a; background: #535353; color: #fff; font-family: "Noto Sans", "Noto Sans CJK SC", sans-serif; font-weight: 600; }
.tooltip h3 { margin-bottom: 8px; }
.tooltip .more { margin: 20px 0 28px; }
.figure { width: 323px; height: 240px; margin-left: 25px; }
.figure text { font: 30px "Liberation Sans", Arial, sans-serif; fill: #3a62a0; }
.help { margin-top: auto; margin-bottom: -3px; }
.mark { position: absolute; border: 2px solid #ed1c24; pointer-events: none; }
.mark-tool { left: 155px; top: 75px; width: 110px; height: 82px; }
.mark-tip { left: 200px; top: 181px; width: 121px; height: 37px; }
```
